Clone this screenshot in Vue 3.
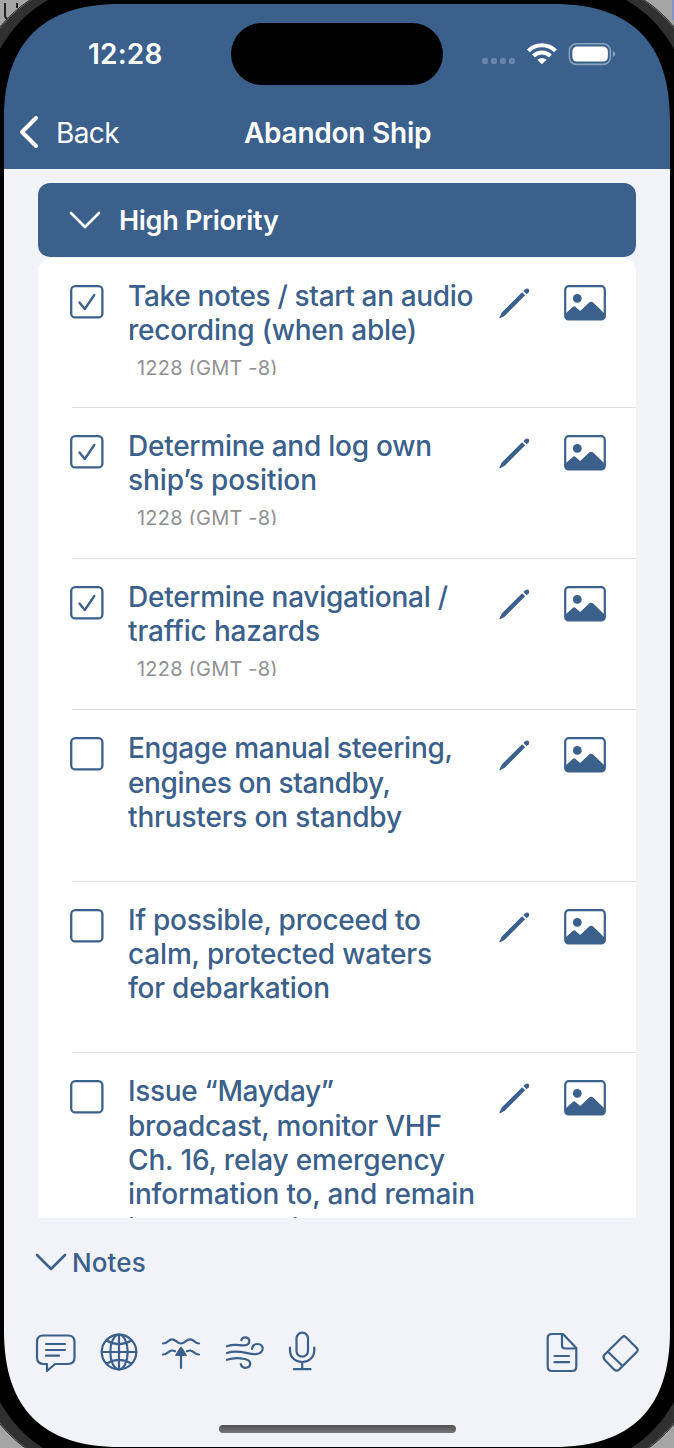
<script setup>
const items = [
  { done: true, h: 149, base: 20.7, lines: [['Take notes / start an audio', 345.5], ['recording (when able)', 289]] },
  { done: true, h: 151, base: 21, lines: [['Determine and log own', 304], ['ship’s position', 189]] },
  { done: true, h: 151, base: 20.7, lines: [['Determine navigational /', 320], ['traffic hazards', 192]] },
  { done: false, h: 172, base: 21.2, lines: [['Engage manual steering,', 325], ['engines on standby,', 263], ['thrusters on standby', 274]] },
  { done: false, h: 171, base: 20.8, lines: [['If possible, proceed to', 293], ['calm, protected waters', 304], ['for debarkation', 202]] },
  { done: false, h: 240, base: 21.4, lines: [['Issue “Mayday”', 206], ['broadcast, monitor VHF', 314], ['Ch. 16, relay emergency', 317], ['information to, and remain', 347], ['in contact with CG', 246]] },
]
</script>

<template>
  <div class="phone">
    <header class="top">
      <div class="status">
        <span class="time">12:28</span>
        <span class="island"></span>
        <svg class="indicators" width="136" height="26" viewBox="0 0 136 26">
          <g fill="#6886ab"><rect x="1" y="15" width="6" height="6" rx="2"/><rect x="10" y="15" width="6" height="6" rx="2"/><rect x="19" y="15" width="6" height="6" rx="2"/><rect x="28" y="15" width="6" height="6" rx="2"/></g>
          <g fill="none" stroke="#fff" stroke-width="4"><path d="M47.4 7.8C54.8 .4 67.2 .4 74.6 7.8"/><path d="M52.5 13C57.4 8.4 64.6 8.4 69.5 13"/></g>
          <path d="M56.4 16.8Q61 13 65.6 16.8L61 21.2Z" fill="#fff"/>
          <rect x="88.5" y=".8" width="41" height="20.6" rx="7" fill="none" stroke="#87a1bf" stroke-width="1.6"/>
          <rect x="91.5" y="3.6" width="35.5" height="15" rx="4.5" fill="#fff"/>
          <path d="M132 8Q134.5 8.8 134.5 11T132 14Z" fill="#87a1bf"/>
        </svg>
      </div>
      <nav class="nav">
        <svg class="backicon" width="22" height="34" viewBox="0 0 22 34"><path d="M18 3L4 17L18 31" fill="none" stroke="#fff" stroke-width="4" stroke-linecap="round" stroke-linejoin="round"/></svg>
        <span class="back">Back</span>
        <h1>Abandon Ship</h1>
      </nav>
    </header>
    <main>
      <section class="group">
        <svg width="34" height="22" viewBox="0 0 34 22"><path d="M3 4L17 18L31 4" fill="none" stroke="#fff" stroke-width="2.7" stroke-linecap="round" stroke-linejoin="round"/></svg>
        <h2>High Priority</h2>
      </section>
      <ul class="list">
        <li v-for="(item, i) in items" :key="i" :style="{ height: item.h + 'px' }">
          <svg class="check" width="34" height="34" viewBox="0 0 34 34" fill="none" stroke="#3a608b">
            <rect x="1.2" y="1.2" width="31.2" height="31.2" rx="4" stroke-width="2.3"/>
            <path v-if="item.done" d="M9.5 17.5L14.8 24L24.3 10" stroke-width="2.3" stroke-linecap="round" stroke-linejoin="round"/>
          </svg>
          <div class="copy">
            <svg class="label" width="360" :height="item.lines.length * 34.3" font-size="28">
              <text v-for="(line, n) in item.lines" :key="n" x="0" :y="item.base + n * 34.3" :textLength="line[1]">{{ line[0] }}</text>
            </svg>
            <div v-if="item.done" class="stamp">1228 (GMT -8)</div>
          </div>
          <svg class="pencil" width="34" height="34" viewBox="0 0 34 34" fill="#3a608b"><path d="M2.6 32.2Q2.2 31.8 2.6 31L4.8 26.5L25.1 6.2L28.2 9.3L7.8 29.7L3.6 32.1Q3 32.5 2.6 32.2Z"/><path d="M26.4 5.1L28.5 3Q30 1.9 31.6 3Q33 4.6 31.7 6.2L29.6 8.3Z"/></svg>
          <svg class="picture" width="42" height="36" viewBox="0 0 42 36"><rect x="1.2" y="1.2" width="39.6" height="33.2" rx="3.5" fill="none" stroke="#3a608b" stroke-width="2.2"/><circle cx="13.3" cy="13.4" r="4.4" fill="#3a608b"/><path d="M1.5 28.5L9 21.8Q10.3 20.8 11.6 21.9L16.2 26L24.6 18Q27 15.6 29.2 17.6L40.5 28.5V31Q40.5 34.4 37 34.4H5Q1.5 34.4 1.5 31Z" fill="#3a608b"/></svg>
        </li>
      </ul>
      <section class="notes">
        <svg width="34" height="22" viewBox="0 0 34 22"><path d="M3 4L17 18L31 4" fill="none" stroke="#3a608b" stroke-width="2.7" stroke-linecap="round" stroke-linejoin="round"/></svg>
        <span>Notes</span>
      </section>
      <footer class="tools">
        <svg class="t1" width="42" height="44" viewBox="0 0 42 44"><path d="M8 4.5H33Q39.5 4.5 39.5 11V26.5Q39.5 33 33 33H20L12 40V33H9Q2 33 2 26.5V11Q2 4.5 8 4.5Z"/><path d="M11 13H30M11 19H30M11 24.7H24"/></svg>
        <svg class="t2" width="40" height="44" viewBox="0 0 40 44"><circle cx="20" cy="21" r="17.3"/><ellipse cx="20" cy="21" rx="8.7" ry="17.3"/><path d="M20 3.7V38.3M2.7 21H37.3M7.5 9.5Q20 16.8 32.5 9.5M7.5 32.5Q20 25.2 32.5 32.5"/></svg>
        <svg class="t3" width="42" height="44" viewBox="0 0 42 44"><path d="M3 12.5C8 12.5 8 8.3 12 8.3S17 12.5 21 12.5S26 8.3 30 8.3S35 12.5 39 12.5M3 23.5C8 23.5 8 19.5 12 19.5Q13.7 19.5 15 20.2M27 20.2Q28.5 19.5 30 19.5C34 19.5 34 23.5 39 23.5M21 22V37"/><path d="M21 16.3Q22 16.3 26.5 24.5H15.5Q20 16.3 21 16.3Z" fill="#3a608b" stroke-width="1"/></svg>
        <svg class="t4" width="42" height="44" viewBox="0 0 42 44"><path d="M3 15.3C12 11.8 18 16 23 13.8C27 11.5 25.5 6.4 21.3 6.4Q18 6.4 17.3 9.2M3 22C15 17.8 23 23.5 31.5 23.1C41 22.3 40.5 13 33.7 13Q28.5 13 28 18M3 28.8C12 25.8 18 27.5 21.5 28.2C28.5 30 27 36.8 21.3 36.8Q17.8 36.8 16.8 33.2"/></svg>
        <svg class="t5" width="30" height="44" viewBox="0 0 30 44"><rect x="9.5" y="1.7" width="11.5" height="24" rx="5.75"/><path d="M3 16.5V19C3 35 27.3 35 27.3 19V16.5M15.2 32V38M7 38.2H23.5"/></svg>
        <svg class="t6" width="34" height="44" viewBox="0 0 34 44"><path d="M18 3H7Q2.7 3 2.7 7V35.5Q2.7 40 7 40H27Q31.3 40 31.3 35.5V17L18 3ZM17 3V14.5Q17 17.5 20 17.5H31M9.5 25H24M9.5 31.2H24"/></svg>
        <svg class="t7" width="40" height="44" viewBox="0 0 40 44"><path d="M3.2 24L21.4 6Q23 4.5 24.7 6L36 17.3Q37.4 19 36 20.7L18.3 38.4Q15.7 40.8 13 38.4L4 29.3Q1.5 26.4 3.2 24ZM6.9 20.7L21.6 35"/></svg>
      </footer>
      <div class="home"></div>
    </main>
    <svg class="bezel" width="674" height="1448" viewBox="0 0 674 1448">
      <defs>
        <g id="corner">
          <path d="M0 0H120V4C42.7 4 4 42.7 4 120H0Z" fill="#000"/>
          <path d="M0 0H48Q18 17 0 49Z" fill="#303030"/>
          <path d="M0 0H31Q14 11 0 28Z" fill="#a5a5a5"/>
          <path d="M30 0Q14 10 0 27" fill="none" stroke="#222" stroke-width="1"/>
        </g>
      </defs>
      <path fill-rule="evenodd" d="M0 0H674V1448H0ZM4 4H670V1447H4Z"/>
      <use href="#corner"/>
      <use href="#corner" transform="translate(674 0) scale(-1 1)"/>
      <use href="#corner" transform="translate(0 1451) scale(1 -1)"/>
      <use href="#corner" transform="translate(674 1451) scale(-1 -1)"/>
      <path d="M5 3V15Q5 18 7 18.5M17 3V8" fill="none" stroke="#222" stroke-width="2"/>
      <rect x="672" width="2" height="20" fill="#8295c5"/>
    </svg>
  </div>
</template>

<style>
body { margin: 0; background: #000; }
</style>
<style scoped>
* { box-sizing: border-box; }
.phone { position: relative; width: 674px; height: 1448px; overflow: hidden; background: #f2f3f8; font-family: Inter, "Liberation Sans", sans-serif; color: #3a608b; }
.top { height: 169px; background: #3a608b; color: #fff; }
.status { height: 97px; padding: 23px 57px 0 88px; display: flex; }
.time { width: 143px; font-size: 28px; font-weight: 600; line-height: 62px; letter-spacing: .2px; }
.island { width: 212px; height: 62px; border-radius: 31px; background: #000; }
.indicators { margin: 20px 0 0 38.7px; }
.nav { height: 70px; padding-left: 18px; display: flex; align-items: center; }
.back { margin-left: 16px; padding-top: 2px; width: 188px; font-size: 28px; letter-spacing: -.6px; }
h1 { margin: 0; padding-top: 2px; font-size: 28px; font-weight: 600; letter-spacing: -.25px; }
main { padding: 14px 38px 0; }
.group { height: 74px; border-radius: 12px; background: #3a608b; color: #fff; display: flex; align-items: center; padding-left: 30px; gap: 17px; }
h2 { margin: 0; font-size: 27px; font-weight: 600; letter-spacing: -.3px; }
.list { margin: 1px 0 0; padding: 0; height: 960px; overflow: hidden; list-style: none; background: #fff; border-radius: 14px 14px 0 0; }
li { display: flex; align-items: flex-start; margin-left: 34px; padding-top: 27px; }
li + li { border-top: 1px solid #dedee0; }
.check { flex: none; margin-left: -2px; }
.copy { width: 360px; margin-left: 24px; }
.label { display: block; overflow: visible; fill: #3a608b; font-weight: 500; }
.stamp { margin: 2px 0 0 9px; height: 19px; overflow: hidden; font-size: 20px; line-height: 24px; color: #909093; letter-spacing: .2px; }
.pencil { flex: none; margin: 1px 0 0 9px; }
.picture { flex: none; margin-left: 33px; }
.notes { display: flex; align-items: center; height: 40px; margin: 24px 0 0 -4px; font-size: 26px; font-weight: 500; letter-spacing: .1px; }
.notes span { margin-left: 4px; }
.tools { display: flex; height: 44px; margin: 49px -5px 0 -3px; }
.tools svg { fill: none; stroke: #3a608b; stroke-width: 2.2; stroke-linecap: round; stroke-linejoin: round; }
.t2 { margin-left: 22px; }
.t3 { margin-left: 21px; }
.t4 { margin-left: 22px; }
.t5 { margin-left: 21px; }
.t6 { margin-left: auto; }
.t7 { margin-left: 22px; }
.home { width: 237px; height: 8px; border-radius: 4px; background: linear-gradient(#515153, #777779); margin: 50px auto 0; }
.bezel { position: absolute; inset: 0; }
</style>
